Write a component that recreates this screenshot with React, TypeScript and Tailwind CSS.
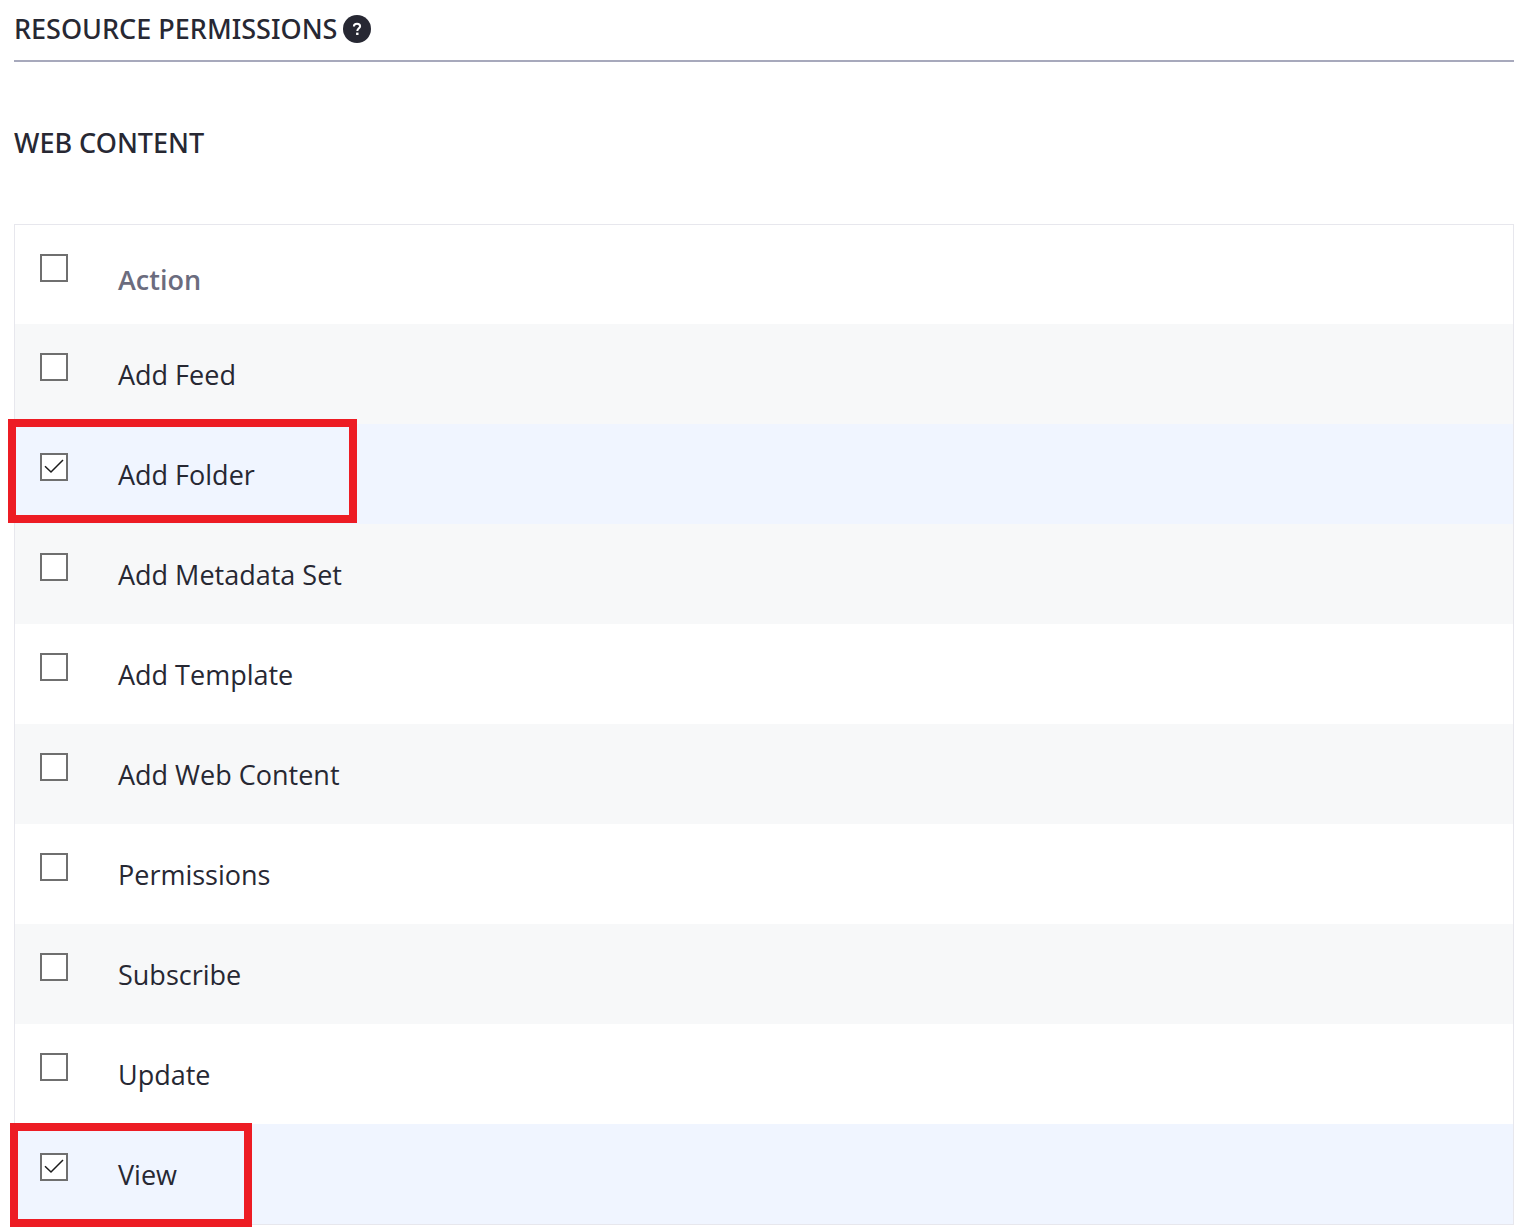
import { useState } from "react";

type Permission = {
  id: string;
  label: string;
  highlight?: string;
};

const permissions: Permission[] = [
  { id: "add-feed", label: "Add Feed" },
  { id: "add-folder", label: "Add Folder", highlight: "-left-[7px] -top-[5px] w-[349px]" },
  { id: "add-metadata-set", label: "Add Metadata Set" },
  { id: "add-template", label: "Add Template" },
  { id: "add-web-content", label: "Add Web Content" },
  { id: "permissions", label: "Permissions" },
  { id: "subscribe", label: "Subscribe" },
  { id: "update", label: "Update" },
  { id: "view", label: "View", highlight: "-left-[5px] -top-[1px] w-[242px]" },
];

type CheckboxProps = {
  id: string;
  label?: string;
  checked: boolean;
  onChange: () => void;
};

function Checkbox({ id, label, checked, onChange }: CheckboxProps) {
  return (
    <span className="relative block size-7">
      <input
        id={id}
        type="checkbox"
        aria-label={label}
        checked={checked}
        onChange={onChange}
        className="peer block size-7 appearance-none border-2 border-[#6f6f6f] bg-white"
      />
      <svg
        viewBox="0 0 28 28"
        fill="none"
        stroke="#1b1b1b"
        strokeWidth="1.5"
        className="pointer-events-none absolute inset-0 hidden size-7 peer-checked:block"
        aria-hidden="true"
      >
        <path d="M5 13.2 L11 19 L23 7" />
      </svg>
    </span>
  );
}

function HelpIcon() {
  return (
    <svg viewBox="0 0 28 28" className="size-7" aria-hidden="true">
      <circle cx="14" cy="14" r="14" fill="#272833" />
      <path
        d="M10.9 11.4 C10.9 9.4 12.2 8.7 14 8.7 C15.9 8.7 17.1 9.6 17.1 11.2 C17.1 13.2 14.3 13.3 14.3 16"
        fill="none"
        stroke="#fff"
        strokeWidth="2"
      />
      <rect x="13.1" y="17.6" width="2.4" height="2.4" fill="#fff" />
    </svg>
  );
}

export default function App() {
  const [selected, setSelected] = useState<string[]>(["add-folder", "view"]);
  const allSelected = selected.length === permissions.length;

  const toggle = (id: string) =>
    setSelected((current) =>
      current.includes(id) ? current.filter((item) => item !== id) : [...current, id],
    );

  return (
    <main className="bg-white pt-[9px] pr-3 pb-2 pl-3.5 font-['Noto_Sans',sans-serif] text-[#272833]">
      <header className="flex items-center gap-1.5 border-b-2 border-[#a7a9bc] pb-[11px]">
        <h1 className="text-[27px] leading-10 font-medium">RESOURCE PERMISSIONS</h1>
        <button type="button" aria-label="Help">
          <HelpIcon />
        </button>
      </header>

      <h2 className="mt-[61px] text-[27px] leading-10 font-medium">WEB CONTENT</h2>

      <table className="mt-[61px] w-full border-separate border-spacing-0 border border-[#e7e7ed] text-left font-['Open_Sans','Noto_Sans',sans-serif] text-[27px] leading-10">
        <thead>
          <tr className="h-[99px]">
            <th className="w-[103px] pt-[29px] pl-[25px] align-top">
              <Checkbox
                id="select-all"
                label="Select all"
                checked={allSelected}
                onChange={() => setSelected(allSelected ? [] : permissions.map((item) => item.id))}
              />
            </th>
            <th className="pt-[35px] align-top font-semibold text-[#6b6c7e]">Action</th>
          </tr>
        </thead>
        <tbody>
          {permissions.map(({ id, label, highlight }) => (
            <tr
              key={id}
              className={
                selected.includes(id) ? "h-25 bg-[#f0f5ff]" : "h-25 bg-white odd:bg-[#f7f8f9]"
              }
            >
              <td className="relative pt-[29px] pl-[25px] align-top">
                <Checkbox
                  id={id}
                  checked={selected.includes(id)}
                  onChange={() => toggle(id)}
                />
                {highlight && (
                  <span
                    className={`pointer-events-none absolute z-10 h-[104px] border-8 border-[#ed1c24] ${highlight}`}
                  />
                )}
              </td>
              <td className="pt-[31px] align-top">
                <label htmlFor={id}>{label}</label>
              </td>
            </tr>
          ))}
        </tbody>
      </table>
    </main>
  );
}
